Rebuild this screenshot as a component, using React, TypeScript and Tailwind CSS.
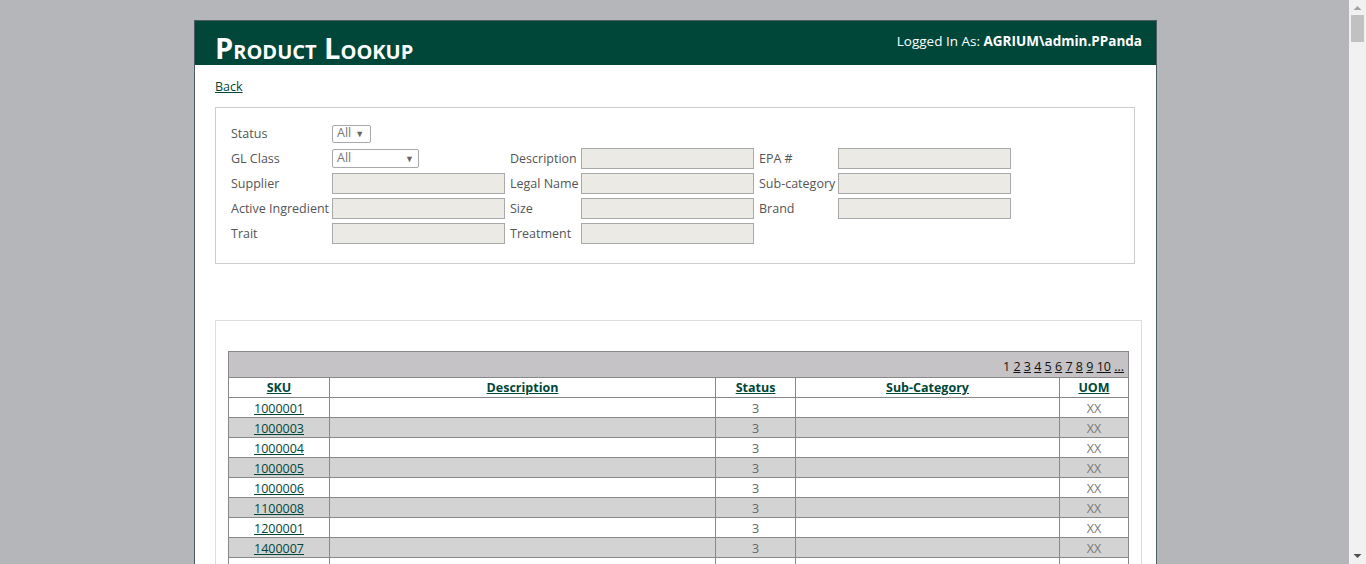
import React from 'react';

const skus = ['1000001', '1000003', '1000004', '1000005', '1000006', '1100008', '1200001', '1400007'];

const TextBox = () => <div className="w-[173px] h-[21px] bg-[#ebeae4] border border-[#a9a9a9]" />;

const Label: React.FC<{ w: string; children?: React.ReactNode }> = ({ w, children }) => (
  <div className={`${w} text-[12.5px] text-[#555] leading-none pt-[2px]`}>{children}</div>
);

// the browser's scrollbar in the reference, drawn over the page edge
const FakeScrollbar = () => (
  <div className="fixed top-0 right-0 w-[17px] h-screen bg-[#f1f1f1] flex flex-col items-center">
    <svg width="17" height="15" viewBox="0 0 17 15" className="shrink-0">
      <path d="M4.5 10 L8.5 6 L12.5 10 Z" fill="#a3a3a3" />
    </svg>
    <div className="w-[13px] h-[27px] bg-[#c1c1c1]" />
    <div className="flex-1" />
    <svg width="17" height="15" viewBox="0 0 17 15" className="shrink-0">
      <path d="M4.5 5 L8.5 9 L12.5 5 Z" fill="#505050" />
    </svg>
  </div>
);

export default function App() {
  return (
    <div className="h-screen overflow-hidden bg-[#b5b6ba] pt-[20px] pl-[194px]" style={{ fontFamily: '"Open Sans", "Noto Sans", sans-serif' }}>
      <div className="w-[963px] bg-white border-x border-t border-[#4b5a63]">
        <div className="h-[44px] bg-[#00473a] flex items-end justify-between px-[20px]">
          <h1 className="text-white font-bold text-[29px] leading-none pb-[3px]" style={{ fontVariant: 'small-caps' }}>
            Product Lookup
          </h1>
          <div className="text-white text-[13.5px] self-start pt-[10px] -mr-[6px]">
            Logged In As: <span className="font-bold">AGRIUM\admin.PPanda</span>
          </div>
        </div>

        <div className="px-[20px] pt-[8px]">
          <a href="#" className="text-[12.5px] text-[#00473a] underline leading-none">Back</a>
        </div>

        <div className="mx-[20px] mt-[10px] w-[920px] border border-[#cccccc] pt-[13px] pb-[17px] pl-[15px]">
          <div className="flex items-center h-[25px]">
            <Label w="w-[101px]">Status</Label>
            <div className="w-[39px] h-[18px] border border-[#a9a9a9] rounded-[2px] flex items-center pl-[4px] text-[12.5px] text-[#777]">
              All <span className="text-[9px] ml-[4px] text-[#666]">▼</span>
            </div>
          </div>
          <div className="flex items-center h-[25px]">
            <Label w="w-[101px]">GL Class</Label>
            <div className="w-[87px] h-[19px] border border-[#a9a9a9] rounded-[2px] flex items-center justify-between px-[4px] text-[12.5px] text-[#777]">
              All <span className="text-[9px] text-[#666]">▼</span>
            </div>
            <div className="w-[91px]" />
            <Label w="w-[71px]">Description</Label>
            <TextBox />
            <div className="w-[5px]" />
            <Label w="w-[79px]">EPA #</Label>
            <TextBox />
          </div>
          <div className="flex items-center h-[25px]">
            <Label w="w-[101px]">Supplier</Label>
            <TextBox />
            <div className="w-[5px]" />
            <Label w="w-[71px]">Legal Name</Label>
            <TextBox />
            <div className="w-[5px]" />
            <Label w="w-[79px]">Sub-category</Label>
            <TextBox />
          </div>
          <div className="flex items-center h-[25px]">
            <Label w="w-[101px]">Active Ingredient</Label>
            <TextBox />
            <div className="w-[5px]" />
            <Label w="w-[71px]">Size</Label>
            <TextBox />
            <div className="w-[5px]" />
            <Label w="w-[79px]">Brand</Label>
            <TextBox />
          </div>
          <div className="flex items-center h-[25px]">
            <Label w="w-[101px]">Trait</Label>
            <TextBox />
            <div className="w-[5px]" />
            <Label w="w-[71px]">Treatment</Label>
            <TextBox />
          </div>
        </div>

        <div className="mx-[20px] mt-[56px] w-[927px] border border-[#dddddd] pt-[30px] pl-[12px] pr-[13px] pb-[20px]">
          <table className="w-[900px] border-collapse text-[12.5px] table-fixed">
            <colgroup>
              <col className="w-[101px]" />
              <col className="w-[386px]" />
              <col className="w-[80px]" />
              <col className="w-[264px]" />
              <col className="w-[69px]" />
            </colgroup>
            <thead>
              <tr className="h-[26px] bg-[#c5c3c6]">
                <td colSpan={5} className="border border-[#888] text-right pr-[4px] pt-[5px] text-[#111] leading-none">
                  1{' '}
                  {['2', '3', '4', '5', '6', '7', '8', '9', '10', '...'].map((p) => (
                    <React.Fragment key={p}>
                      <a href="#" className="underline text-[#111]">{p}</a>{' '}
                    </React.Fragment>
                  ))}
                </td>
              </tr>
              <tr className="h-[20px] bg-white">
                {['SKU', 'Description', 'Status', 'Sub-Category', 'UOM'].map((h) => (
                  <th key={h} className="border border-[#888] font-bold text-center leading-none pt-[2px]">
                    <a href="#" className="underline text-[#00473a]">{h}</a>
                  </th>
                ))}
              </tr>
            </thead>
            <tbody>
              {skus.map((s, i) => (
                <tr key={s} className={`h-[20px] ${i % 2 ? 'bg-[#d3d3d3]' : 'bg-white'}`}>
                  <td className="border border-[#888] text-center leading-none pt-[3px]">
                    <a href="#" className="underline text-[#00473a]">{s}</a>
                  </td>
                  <td className="border border-[#888]" />
                  <td className="border border-[#888] text-center text-[#666] leading-none pt-[3px]">3</td>
                  <td className="border border-[#888]" />
                  <td className="border border-[#888] text-center text-[#777] leading-none pt-[3px]">XX</td>
                </tr>
              ))}
              <tr className="h-[20px] bg-white">
                <td className="border border-[#888]" />
                <td className="border border-[#888]" />
                <td className="border border-[#888]" />
                <td className="border border-[#888]" />
                <td className="border border-[#888]" />
              </tr>
            </tbody>
          </table>
        </div>
      </div>
      <FakeScrollbar />
    </div>
  );
}
